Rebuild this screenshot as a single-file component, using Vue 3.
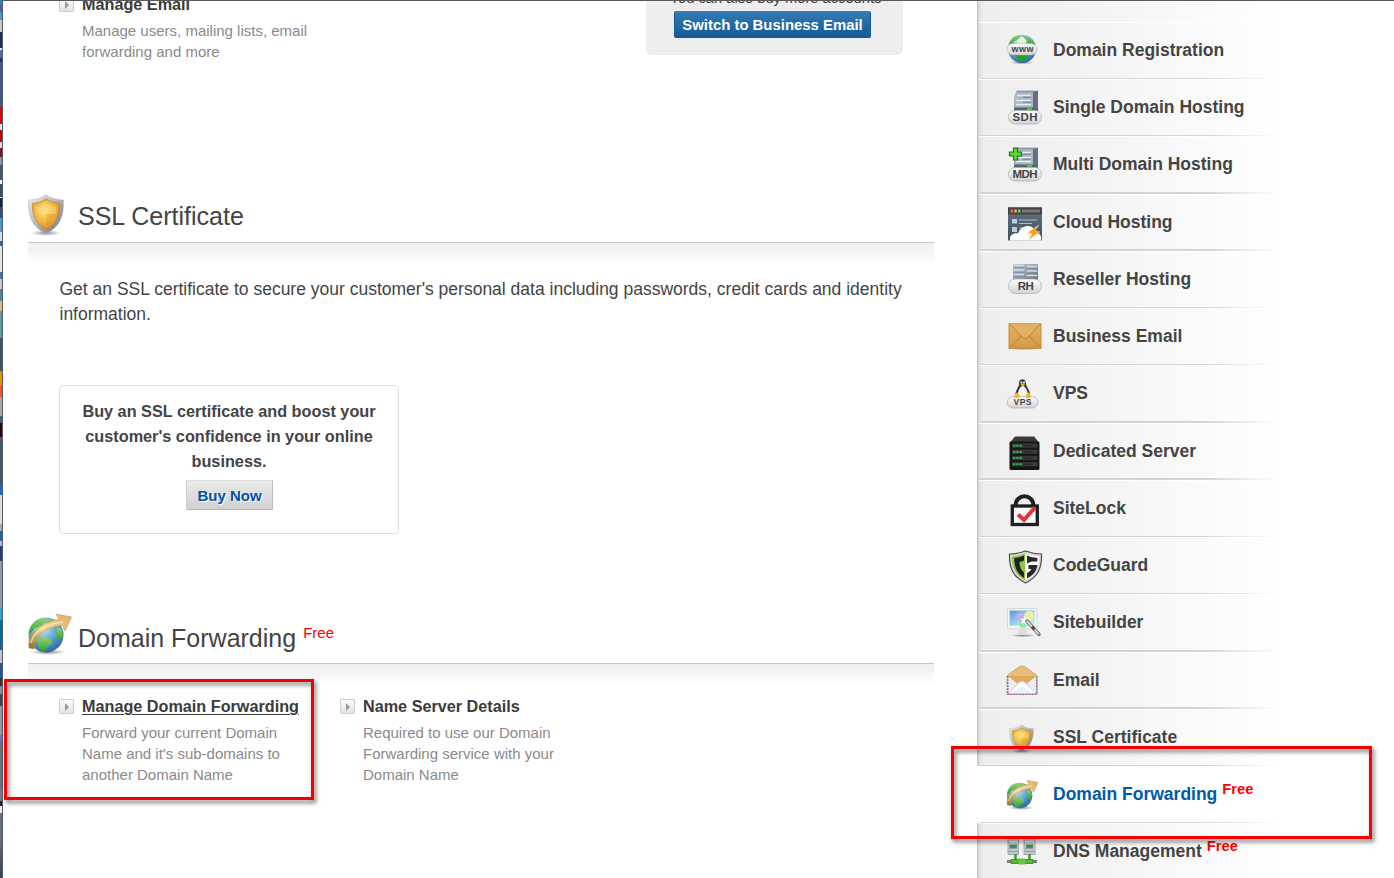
<script setup>
const items = [
  { label: 'Domain Registration', icon: 'globe' },
  { label: 'Single Domain Hosting', icon: 'sdh' },
  { label: 'Multi Domain Hosting', icon: 'mdh' },
  { label: 'Cloud Hosting', icon: 'cloud' },
  { label: 'Reseller Hosting', icon: 'rh' },
  { label: 'Business Email', icon: 'mail' },
  { label: 'VPS', icon: 'vps' },
  { label: 'Dedicated Server', icon: 'rack' },
  { label: 'SiteLock', icon: 'lock' },
  { label: 'CodeGuard', icon: 'guard' },
  { label: 'Sitebuilder', icon: 'builder' },
  { label: 'Email', icon: 'open' },
  { label: 'SSL Certificate', icon: 'shield' },
  { label: 'Domain Forwarding', icon: 'forward', free: true, active: true },
  { label: 'DNS Management', icon: 'dns', free: true },
]
</script>

<template>
  <div class="screen">
    <svg class="defs" width="0" height="0">
      <defs>
        <radialGradient id="sea" cx=".4" cy=".3" r=".75"><stop offset="0" stop-color="#cfeaf6" /><stop offset=".5" stop-color="#63a9d6" /><stop offset="1" stop-color="#24649d" /></radialGradient>
        <linearGradient id="land" x1="0" y1="0" x2="0" y2="1"><stop offset="0" stop-color="#93d070" /><stop offset="1" stop-color="#2f9f2a" /></linearGradient>
        <linearGradient id="pill" x1="0" y1="0" x2="0" y2="1"><stop offset="0" stop-color="#fff" /><stop offset="1" stop-color="#d2d3d5" /></linearGradient>
        <linearGradient id="metal" x1="0" y1="0" x2="1" y2="1"><stop offset="0" stop-color="#c3ccd6" /><stop offset=".55" stop-color="#93a0ae" /><stop offset="1" stop-color="#5d6875" /></linearGradient>
        <linearGradient id="rim" x1="0" y1="0" x2="1" y2="1"><stop offset="0" stop-color="#f0f0f0" /><stop offset=".5" stop-color="#b4b4b4" /><stop offset="1" stop-color="#6f6f6f" /></linearGradient>
        <radialGradient id="gold" cx=".45" cy=".4" r=".65"><stop offset="0" stop-color="#fbe07a" /><stop offset=".55" stop-color="#f0b740" /><stop offset="1" stop-color="#d58c1c" /></radialGradient>
        <linearGradient id="ribbon" x1="0" y1="1" x2="1" y2="0"><stop offset="0" stop-color="#8d6b1e" /><stop offset=".45" stop-color="#ecd695" /><stop offset="1" stop-color="#e5aa66" /></linearGradient>
        <linearGradient id="kraft" x1="0" y1="0" x2="0" y2="1"><stop offset="0" stop-color="#e5b162" /><stop offset="1" stop-color="#d69a45" /></linearGradient>
        <linearGradient id="slate" x1="0" y1="0" x2="0" y2="1"><stop offset="0" stop-color="#66737d" /><stop offset="1" stop-color="#3e4f5c" /></linearGradient>
        <linearGradient id="display" x1="0" y1="0" x2="1" y2="1"><stop offset="0" stop-color="#4f9bd5" /><stop offset=".6" stop-color="#a9d9ee" /><stop offset="1" stop-color="#d9f0c6" /></linearGradient>
        <radialGradient id="shade"><stop offset="0" stop-color="#000" stop-opacity=".45" /><stop offset="1" stop-color="#000" stop-opacity="0" /></radialGradient>
        <symbol id="badge-shield" viewBox="0 0 36 42">
          <ellipse cx="18" cy="39" rx="15" ry="3" fill="url(#shade)" />
          <path d="M18 .8C13 4.500 7 6 .5 6C0 20 3 33 18 39.500C33 33 36 20 35.500 6C29 6 23 4.500 18 .8Z" fill="url(#rim)" stroke="#bbb" stroke-width=".6" />
          <path d="M18 5C13.500 8 9 9 4.300 9.300C4.300 20 7.500 30 18 35.200C28.500 30 31.700 20 31.700 9.300C27 9 22.500 8 18 5Z" fill="url(#gold)" stroke="#b98235" stroke-width=".7" />
          <path d="M18 9C14 11.500 11 12 7.500 12.500L8 20H28L28.500 12.500C25 12 22 11.500 18 9Z" fill="#fff3a8" opacity=".25" />
          <path d="M18 20H28C26.500 26 23 30 18 32Z" fill="#dc860c" opacity=".25" />
        </symbol>
        <symbol id="badge-forward" viewBox="0 0 44 42">
          <ellipse cx="20" cy="39" rx="18" ry="3" fill="url(#shade)" />
          <circle cx="18" cy="22" r="17.500" fill="url(#sea)" />
          <path d="M6 9C10 5 19 4 25 7L22 10L17 9L13 13L7 15L3 20L1 21C1 16 3 12 6 9Z" fill="url(#land)" />
          <path d="M9 26L17 24L23 27L24 31L19 34L16 39L11 36Z" fill="url(#land)" />
          <path d="M29 14L33 15L35.400 22L32 28L28 23Z" fill="url(#land)" />
          <path d="M1 35C-1 22 12 9 31 6.500L28 1L43.500 4L37 18L34.500 12.500C20 14 8 20 6 36Z" fill="url(#ribbon)" stroke="#b98a3c" stroke-width=".5" />
          <path d="M3 30C5 19 17 11 35 9" fill="none" stroke="#fff4bd" stroke-width="1.400" opacity=".7" />
        </symbol>
        <symbol id="tower" viewBox="0 0 24 22">
          <path d="M3 0H24V22H0V6Z" fill="url(#metal)" />
          <path d="M3 0H24L19 2H2Z" fill="#8895a3" />
          <path d="M2 2H19V18H1V5Z" fill="#a9b6c3" />
          <path d="M19 2L24 0V22L19 18Z" fill="#65717f" />
          <path d="M3 5H17M2 10H17M2 14H17" stroke="#e9eef3" stroke-width="1.600" />
          <path d="M9 6.700H17M9 11.700H17" stroke="#6e7d8c" stroke-width="1" />
          <path d="M0 17H24V22H0Z" fill="#59656f" />
          <path d="M13 17.500H18V20.500H13Z" fill="#37d623" />
        </symbol>
      </defs>
    </svg>

    <div class="strip"></div>
    <div class="window">
      <main class="content">
        <section class="email">
          <div class="feature">
            <i class="bullet"></i>
            <div>
              <h3>Manage Email</h3>
              <p>Manage users, mailing lists, email<br>forwarding and more</p>
            </div>
          </div>
          <aside class="upsell">
            <p>You can also buy more accounts</p>
            <button class="blue">Switch to Business Email</button>
          </aside>
        </section>

        <section class="ssl">
          <header>
            <svg class="head-icon shield" width="36" height="42"><use href="#badge-shield" /></svg>
            <h2>SSL Certificate</h2>
          </header>
          <div class="fade"></div>
          <p class="intro">Get an SSL certificate to secure your customer's personal data including passwords, credit cards and identity information.</p>
          <div class="promo">
            <p>Buy an SSL certificate and boost your<br>customer's confidence in your online<br>business.</p>
            <button class="grey">Buy Now</button>
          </div>
        </section>

        <section class="forwarding">
          <header>
            <svg class="head-icon" width="44" height="42"><use href="#badge-forward" /></svg>
            <h2>Domain Forwarding</h2><span class="free">Free</span>
          </header>
          <div class="fade"></div>
          <div class="features">
            <div class="feature">
              <i class="bullet"></i>
              <div>
                <h3 class="linked">Manage Domain Forwarding</h3>
                <p>Forward your current Domain<br>Name and it's sub-domains to<br>another Domain Name</p>
              </div>
            </div>
            <div class="feature">
              <i class="bullet"></i>
              <div>
                <h3>Name Server Details</h3>
                <p>Required to use our Domain<br>Forwarding service with your<br>Domain Name</p>
              </div>
            </div>
          </div>
        </section>
      </main>

      <nav class="sidebar">
        <div class="stub"></div>
        <a v-for="item in items" :key="item.icon" class="row" :class="{ active: item.active }">
          <svg width="44" height="57" viewBox="0 0 44 57">
            <g v-if="item.icon === 'globe'">
              <ellipse cx="22" cy="40.500" rx="12" ry="2" fill="url(#shade)" />
              <circle cx="22" cy="27" r="14" fill="url(#sea)" />
              <path d="M9 22C11 15 17 12.500 22 13L19 17L14 19L12 24ZM24 14L32 17L35 23L28 22Z" fill="url(#land)" />
              <path d="M15 33H29L25 37L22 40.500L18 37Z" fill="#27a11e" />
              <path d="M17 18L22 14L27 19L24 22H18Z" fill="#e7f5dc" />
              <rect x="7" y="21.500" width="30" height="11.500" rx="5.700" fill="url(#pill)" stroke="#aaa" stroke-width=".5" />
              <text x="22.500" y="29.600" font-size="9" textLength="22" class="tag">www</text>
            </g>
            <g v-else-if="item.icon === 'sdh' || item.icon === 'mdh'">
              <use href="#tower" x="14" y="11.500" width="24" height="22" />
              <rect x="8.500" y="31.500" width="33" height="13.500" rx="6.700" fill="url(#pill)" stroke="#aaa" stroke-width=".7" />
              <text x="25" y="42.300" font-size="11.500" textLength="25" class="tag">{{ item.icon.toUpperCase() }}</text>
              <path v-if="item.icon === 'mdh'" d="M13.500 12H17.500V16H21.500V20H17.500V24H13.500V20H9.500V16H13.500Z" fill="#5fd53c" stroke="#187a10" stroke-width="1.200" />
            </g>
            <g v-else-if="item.icon === 'cloud'">
              <rect x="8" y="13.400" width="34" height="33" fill="url(#slate)" />
              <rect x="8" y="13.400" width="34" height="7" fill="#444" />
              <rect x="10.500" y="15.500" width="2.500" height="3" fill="#f26a5c" /><rect x="14.300" y="15.500" width="2.500" height="3" fill="#efb35a" /><rect x="18" y="15.500" width="2.500" height="3" fill="#6fca7b" /><rect x="22" y="15.500" width="18" height="3" fill="#777" />
              <path d="M12 25H17V29.500H12ZM12 33H17V38H12Z" fill="#b8cfdd" /><path d="M19 26H37M19 29.500H32M19 34H25" stroke="#a5c0d1" stroke-width="1.200" />
              <path d="M10 46.400C9 42 13 38.500 18 39.500C20 34 24 32 28 32C32 32 35 35 35 38C40 39 42 42 41 46.400Z" fill="#fff" />
              <path d="M39 31L27.500 38.500L32 40L28 46L40 38L35 36.500Z" fill="#ff9c12" stroke="#fff" stroke-width=".4" />
            </g>
            <g v-else-if="item.icon === 'rh'">
              <path d="M13 13H38V30H13Z" fill="url(#metal)" />
              <path d="M14 14.500H24M14 19H24M14 23.500H24M27 15.500H37M27 20H37M27 24.500H37" stroke="#d3dce4" stroke-width="1.600" />
              <path d="M13 16.700H25M13 21.300H25M13 26H25M26 17.700H38M26 22.300H38M26 27H38" stroke="#75828f" stroke-width=".8" />
              <rect x="8.500" y="28" width="33" height="14.500" rx="7" fill="url(#pill)" stroke="#aaa" stroke-width=".7" />
              <text x="25.800" y="39.400" font-size="11.500" textLength="16" class="tag">RH</text>
            </g>
            <g v-else-if="item.icon === 'mail'">
              <ellipse cx="25" cy="40.300" rx="19" ry="1.800" fill="url(#shade)" />
              <rect x="9" y="15.800" width="32" height="24.500" fill="url(#kraft)" stroke="#bd873a" stroke-width=".9" />
              <path d="M10 39.500L21 28M40 39.500L29 28" stroke="#b57f35" stroke-width="1" />
              <path d="M10 16.500L22.500 29.500Q25 31.500 27.500 29.500L40 16.500" fill="#e3b165" stroke="#b98339" stroke-width="1" />
            </g>
            <g v-else-if="item.icon === 'vps'">
              <path d="M19 18.500C18.500 12.800 26 12.800 26 18.500C26 22 30.500 24.500 30 32H15.500C14.500 25 19.500 22 19 18.500Z" fill="#3a3a3a" />
              <path d="M22.700 20.500C19.500 22.500 17.500 26 18 32H28C28 26 26 22.500 22.700 20.500Z" fill="#f6f6f6" />
              <circle cx="21.300" cy="17.500" r="1" fill="#fff" /><circle cx="24" cy="17.500" r="1" fill="#fff" /><path d="M20.500 19.500L22.700 18.300L25 19.500L22.700 21.500Z" fill="#f6b817" />
              <rect x="7.300" y="31.500" width="30.500" height="11.500" rx="5.700" fill="url(#pill)" stroke="#aaa" stroke-width=".7" />
              <path d="M14.500 30.500L17 27.300L20.500 31.500L18.500 33H14.500ZM25 31.500L28 27.300L31 30.500L30.500 33H27Z" fill="#f5b81d" />
              <text x="22.500" y="40" font-size="8.500" textLength="18" class="tag">VPS</text>
            </g>
            <g v-else-if="item.icon === 'rack'">
              <path d="M9.500 20L15 13.600H34L39.500 20Z" fill="#3a3a3a" />
              <rect x="9.500" y="18.500" width="30" height="28.500" rx="1.500" fill="#161616" />
              <g v-for="n in 4" :key="n">
                <rect x="12" :y="14.300 + n * 6.200" width="25.500" height="4.200" fill="#393939" />
                <path :d="`M13 ${16.500 + n * 6.200}H22`" stroke="#36ad52" stroke-width="2" stroke-dasharray="2.300 1" />
                <path :d="`M24 ${16.500 + n * 6.200}H32`" stroke="#262626" stroke-width="1" />
              </g>
            </g>
            <g v-else-if="item.icon === 'lock'">
              <path d="M15.500 26C15.500 13 33.500 13 33.500 26" fill="none" stroke="#222" stroke-width="4" />
              <rect x="12.300" y="26" width="25" height="18.500" fill="#f8f8f8" stroke="#1f1f1f" stroke-width="3.300" />
              <path d="M18 34.500L24 40L35 27.500" fill="none" stroke="#df3440" stroke-width="4" />
            </g>
            <g v-else-if="item.icon === 'guard'">
              <path d="M25.500 14C20 16 15 17 9.500 17C9 31 13 40 25.500 46C38 40 42 31 41.500 17C36 17 31 16 25.500 14Z" fill="#d9d9d9" stroke="#4d4d4d" stroke-width="1.200" />
              <path d="M25.500 16.500C20.500 18.300 16.500 19 11.800 19.200C12 31 15 37.500 25.500 43.500Z" fill="#8dc63f" />
              <path d="M25.500 16.500C30.500 18.300 34.500 19 39.200 19.200C39 31 36 37.500 25.500 43.500Z" fill="#fff" />
              <path d="M24 18.500C20.500 20 18 20.500 14.200 21C14.400 31 17 36.500 24 41V35.500C20.500 32.500 19.500 29 19.500 25C21.500 24.500 23 24 24 23.500Z" fill="#202020" />
              <path d="M27 18.500C30.500 20 33.500 20.500 37.500 21L37.200 24.500H31.500L27 26.500ZM28.500 28H37.500C36.500 34.500 33 38.500 27 41.500V36C30 34.500 31 33 31.500 32H28.500Z" fill="#292929" />
            </g>
            <g v-else-if="item.icon === 'builder'">
              <ellipse cx="23" cy="41.500" rx="13" ry="1.800" fill="url(#shade)" />
              <path d="M19 34H26L27 41H18Z" fill="#ddd" />
              <rect x="7.500" y="14.500" width="29.500" height="20.500" rx="1.500" fill="#f2f4f5" stroke="#ccc" stroke-width=".7" />
              <rect x="9.700" y="16.500" width="25" height="15" fill="url(#display)" />
              <circle cx="20" cy="23" r="4" fill="#d7a8ee" opacity=".8" /><circle cx="29" cy="22" r="5" fill="#f4f0a0" opacity=".9" /><circle cx="23" cy="30" r="4" fill="#79e68b" opacity=".7" />
              <path d="M24.500 22L26 25L29.500 25.500L27 28L27 31L24 29L21 30L22 27L20 24.500L23 25Z" fill="#fff" opacity=".8" />
              <path d="M27 27L39 40.500" stroke="#777" stroke-width="3.500" stroke-linecap="round" /><path d="M27 27L38.500 40" stroke="#e5e5e5" stroke-width="1.600" /><path d="M32 32.500L34.500 35.500" stroke="#444" stroke-width="2.500" />
            </g>
            <g v-else-if="item.icon === 'open'">
              <path d="M7.200 23.500L19 14.800Q22 13 25 14.800L37 23.500V42.500H7.200Z" fill="#e8bd7a" stroke="#cfa05a" stroke-width=".8" />
              <path d="M8.500 24H36L27 31Q22 27 17 31Z" fill="#dfa95b" />
              <path d="M7.500 24L17 31.500L8 42H7.500ZM36.700 24L27 31.500L36 42H36.700Z" fill="#e9eff4" />
              <path d="M8 42L19 30.500Q22 28 25 30.500L36.500 42Z" fill="#fff" stroke="#c4d8e6" stroke-width="1" />
              <path d="M11 42L20 35H24L33 42Z" fill="#e8f2f8" />
              <path d="M7.700 24V42.300H36.700V24" fill="none" stroke="#d9574e" stroke-width="1.600" stroke-dasharray="2 4" /><path d="M7.700 27V42.300H36.700V24" fill="none" stroke="#5b8bd0" stroke-width="1.600" stroke-dasharray="2 4" />
            </g>
            <use v-else-if="item.icon === 'shield'" href="#badge-shield" x="8.500" y="15.500" width="26" height="28.500" />
            <use v-else-if="item.icon === 'forward'" href="#badge-forward" x="6.500" y="13.500" width="32" height="30.500" />
            <g v-else>
              <path d="M8 15.500H18.500V31.500H8ZM24 15.500H35V31.500H24Z" fill="#bfc8ce" stroke="#929ca3" stroke-width=".8" />
              <path d="M9 18.500H18M25 18.500H34.500" stroke="#edf1f3" stroke-width="1.500" />
              <path d="M9.500 23.500H17M26 23.500H33" stroke="#6d7b74" stroke-width="4" /><path d="M11 23.500H16M28 23.500H32.500" stroke="#2f9a2a" stroke-width="2" /><path d="M9 28.500H18M25 28.500H34.500" stroke="#929da5" stroke-width="1" />
              <path d="M15.500 31V38M29.500 31V38" stroke="#3d9b29" stroke-width="2.500" />
              <path d="M7 38.500H37" stroke="#788078" stroke-width="3" /><path d="M11 36.500H33V40.500H11Z" fill="#57b83b" stroke="#2e8120" stroke-width=".8" /><path d="M18.500 35.500H25V41.500H18.500Z" fill="#64c744" />
            </g>
          </svg>
          <span class="label">{{ item.label }}</span><span v-if="item.free" class="free">Free</span>
        </a>
      </nav>
    </div>

    <div class="mark mark-feature"></div>
    <div class="mark mark-menu"></div>
  </div>
</template>

<style>
body { background: #fff; overflow: hidden; }
</style>

<style scoped>
.screen { position: relative; display: flex; width: 1394px; height: 878px; overflow: hidden; background: #fff; font-family: "Liberation Sans", Arial, sans-serif; color: #444; }
.defs { position: absolute; }
.strip {
  flex: none; width: 2px; height: 878px;
  background: linear-gradient(#2c83c4 0 4px, #4a6992 4px 12px, #4398d8 12px 20px, #c9c9c9 20px 32px, #1c3159 32px 48px, #eee 48px 50px, #4174b5 50px 58px, #20354f 58px 62px, #3d5c88 62px 106px, #e30000 107px 124px, #eee 124px 130px, #bd0000 130px 142px, #ddd 142px 148px, #791623 148px 157px, #8d929b 157px 165px, #3d5978 165px 180px, #fff 180px 184px, #344f70 184px 197px, #fff 197px 198px, #17233a 198px 207px, #334f76 207px 218px, #4796d8 218px 232px, #ddd 232px 241px, #2865ac 241px 246px, #e5e5e5 246px 272px, #4176b6 272px 279px, #ccc 279px 289px, #4d8793 289px 301px, #e4ba70 301px 311px, #5b99a5 311px 338px, #3a566f 338px 371px, #f28b00 371px 385px, #ef5825 385px 397px, #a9a9a9 397px 416px, #4b5d76 416px 423px, #2a0509 423px 437px, #45566d 437px 484px, #1969d0 484px 495px, #ddd 495px 524px, #aaa 524px 531px, #1a64b8 531px 541px, #bbb 541px 546px, #1c407b 546px 561px, #939aa7 561px 608px, #24a4db 608px 620px, #0069ad 620px 650px, #c5c5c5 650px 663px, #1758a2 663px 678px, #333 678px 686px, #8790a0 686px 694px, #444 694px 706px, #9498a4 706px 735px, #7770c0 735px 742px, #667181 742px 790px, #747b88 790px 801px, #222 801px 806px, #eee 806px 813px, #68717f 813px 835px, #354050 878px);
}
.window { display: flex; box-sizing: border-box; flex: 1; height: 878px; border-left: 1px solid #555b66; border-top: 1px solid #5b5859; overflow: hidden; }
.content { flex: none; width: 906px; padding-left: 25px; }
h2, h3, p { margin: 0; }
h2 { font-size: 25px; font-weight: 400; line-height: 30px; }
h3 { font-size: 16.220px; line-height: 21px; margin-bottom: 5px; color: #3b3b3b; white-space: nowrap; }
.linked { text-decoration: underline; text-underline-offset: 2px; text-decoration-thickness: 1px; }
.feature { display: flex; width: 281px; }
.feature p { font-size: 15px; line-height: 21px; color: #8a8a8a; white-space: nowrap; }
.bullet { flex: none; box-sizing: border-box; width: 15px; height: 15px; margin: 3px 8px 0 0; border: 1px solid #ccc; border-radius: 1px; background: linear-gradient(#fafafa, #e4e4e4); }
.bullet::after { content: ""; display: block; margin: 3px 0 0 5px; width: 0; height: 0; border: solid transparent; border-width: 4px 0 4px 4px; border-left-color: #999; }
.email { display: flex; height: 193px; padding-left: 31px; }
.email .feature { width: 587px; margin-top: -7px; }
.upsell { width: 257px; height: 54px; background: #eee; border-radius: 0 0 5px 5px; text-align: center; }
.upsell p { height: 10px; margin-top: -11px; padding: 0 0 11px 2px; font-size: 14.700px; line-height: 16px; }
button { display: block; box-sizing: border-box; margin: 0 auto; padding: 0; font: bold 15px "Liberation Sans", Arial, sans-serif; white-space: nowrap; }
.blue { width: 197px; height: 27px; margin-left: 28px; font-size: 14.900px; border: 1px solid #16599a; border-top-color: #377dbd; border-radius: 2px; color: #fff; background: linear-gradient(#347bb5, #145a94); }
header { display: flex; box-sizing: border-box; height: 49px; border-bottom: 1px solid #c6c6c6; }
.head-icon { flex: none; margin-right: 6px; }
.shield { margin-right: 14px; }
.ssl header h2 { margin-top: 7px; }
.fade { height: 20px; background: linear-gradient(#f0f0f0, #f3f3f3 40%, #fff); }
.intro { padding: 14px 0 0 31.500px; width: 850px; font-size: 17.500px; line-height: 25px; }
.promo { box-sizing: border-box; width: 340px; height: 149px; margin: 58px 0 0 31px; padding-top: 13px; border: 1px solid #ddd; border-radius: 4px; text-align: center; }
.promo p { font-size: 16.250px; font-weight: 700; line-height: 25px; }
.grey { width: 87px; height: 30px; margin-top: 6px; padding-left: 1px; border: 1px solid #d0d0d0; border-top-color: #ddd; border-right-color: #bbb; border-bottom-color: #b5b5b5; border-radius: 1px; color: #00539f; text-shadow: 1px 1px #fff; background: linear-gradient(#eaeaea, #d1d1d1); }
.forwarding { margin-top: 79px; }
.forwarding header { height: 51px; }
.forwarding header h2 { margin-top: 10px; }
.free { color: #f00; }
header .free { margin: 11px 0 0 7px; font-size: 15px; line-height: 18px; }
.features { display: flex; padding: 12px 0 0 31px; }
.sidebar { flex: none; width: 302px; margin-left: 43px; }
.stub, .row { box-sizing: border-box; background: linear-gradient(90deg, #c6c6c6, #d6d6d6 2px, #e6e6e6 3px, rgba(237,237,237,0) 7px), linear-gradient(90deg, #eee, #f4f4f4 40%, #fbfbfb 78%, #fff); }
.stub { height: 20.900px; }
.row { position: relative; display: flex; height: 57.250px; padding-left: 23px; }
.row::before { content: ""; position: absolute; left: 2px; right: 0; top: 0; height: 1px; background: #fff; }
.row::after { content: ""; position: absolute; left: 3px; right: 0; bottom: 0; height: 1.500px; background: linear-gradient(90deg, #d2d2d2, #d4d4d4 75%, #fff); }
.row svg { flex: none; }
.label { margin-left: 9px; font-size: 17.500px; font-weight: 700; line-height: 57px; white-space: nowrap; }
.row .free { margin: 13px 0 0 5px; font-size: 14.700px; font-weight: 700; line-height: 20px; }
.row.active { background: #fff; }
.active .label { color: #0059aa; }
.tag { font-family: "Liberation Sans", Arial, sans-serif; font-weight: 700; fill: #444; text-anchor: middle; }
.mark { position: absolute; box-sizing: border-box; border: 3px solid #f40000; filter: drop-shadow(2px 3px 2px rgba(0,0,0,.55)); }
.mark-feature { left: 4px; top: 679px; width: 310px; height: 121px; }
.mark-menu { left: 951px; top: 746px; width: 421px; height: 93px; }
</style>
